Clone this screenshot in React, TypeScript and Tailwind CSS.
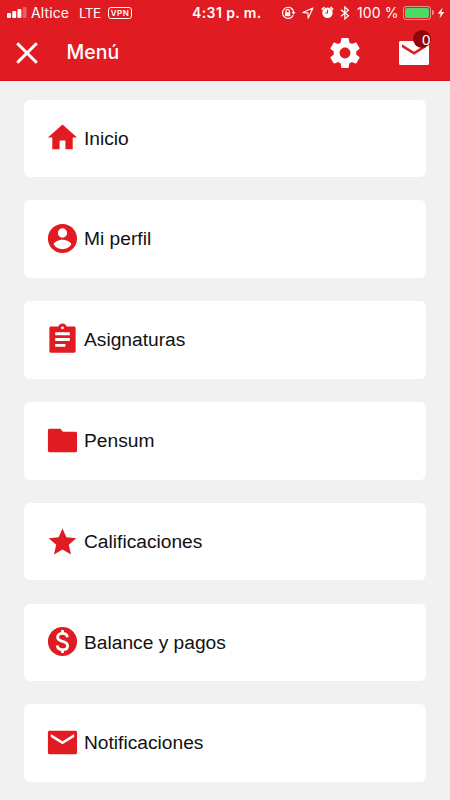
import type { ReactNode } from "react";

type MenuItem = {
  label: string;
  icon: ReactNode;
};

const mailPath =
  "M21 4H3c-.55 0-1 .45-1 1v14c0 .55.45 1 1 1h18c.55 0 1-.45 1-1V5c0-.55-.45-1-1-1zm-1 4.2l-8 5-8-5V6.1l8 5 8-5z";

const items: MenuItem[] = [
  { label: "Inicio", icon: <path d="M10 20v-6h4v6h5v-8h3L12 3 2 12h3v8z" /> },
  {
    label: "Mi perfil",
    icon: (
      <path d="M12 2C6.48 2 2 6.48 2 12s4.48 10 10 10 10-4.48 10-10S17.52 2 12 2zm0 3a3.2 3.2 0 1 1 0 6.4A3.2 3.2 0 0 1 12 5zm0 14.3c-2.5 0-4.71-1.28-6-3.22.03-1.99 4-3.18 6-3.18s5.97 1.19 6 3.18c-1.29 1.94-3.5 3.22-6 3.22z" />
    ),
  },
  {
    label: "Asignaturas",
    icon: (
      <path d="M20 3h-5.18C14.4 1.84 13.3 1 12 1s-2.4.84-2.82 2H4c-.55 0-1 .45-1 1v16c0 .55.45 1 1 1h16c.55 0 1-.45 1-1V4c0-.55-.45-1-1-1zm-8 0c.55 0 1 .45 1 1s-.45 1-1 1-1-.45-1-1 .45-1 1-1zm2 14H7v-2h7v2zm3-4H7v-2h10v2zm0-4H7V7h10v2z" />
    ),
  },
  {
    label: "Pensum",
    icon: (
      <path d="M10.3 4H3c-.55 0-1 .45-1 1v14c0 .55.45 1 1 1h18c.55 0 1-.45 1-1V7c0-.55-.45-1-1-1h-8.8l-1.4-1.7c-.1-.2-.3-.3-.5-.3z" />
    ),
  },
  {
    label: "Calificaciones",
    icon: <path d="M12 17.4l5.85 3.55-1.55-6.7 5.15-4.5-6.8-.6L12 3 9.35 9.15l-6.8.6 5.15 4.5-1.55 6.7z" />,
  },
  {
    label: "Balance y pagos",
    icon: (
      <>
        <circle cx="12" cy="12" r="10" />
        <path
          d="M15.4 9.1c-.2-1.7-1.5-2.7-3.4-2.7s-3.4 1-3.4 2.7c0 1.6 1.2 2.2 3.4 2.8 2.3.6 3.5 1.4 3.5 3.1 0 1.6-1.4 2.6-3.5 2.6s-3.5-1.1-3.6-2.9M12 4.1v2.4M12 17.5v2.4"
          fill="none"
          stroke="#fff"
          strokeWidth="1.9"
        />
      </>
    ),
  },
  { label: "Notificaciones", icon: <path d={mailPath} /> },
];

function StatusBar() {
  return (
    <div className="flex h-[25px] items-center whitespace-nowrap pl-[7px] text-[14px] leading-6 font-['Inter',sans-serif]">
      <svg width="20" height="11" viewBox="0 0 20 11" fill="currentColor">
        <rect x="0" y="6" width="4" height="5" rx="1" />
        <rect x="5.2" y="4" width="4" height="7" rx="1" />
        <rect x="10.4" y="2" width="4" height="9" rx="1" />
        <rect x="15.6" y="0" width="4" height="11" rx="1" opacity="0.3" />
      </svg>
      <span className="ml-1 w-[48px] text-[14px] tracking-[0.1px]">Altice</span>
      <span className="w-[29px] text-[13.5px] tracking-[-0.5px]">LTE</span>
      <span className="flex h-[12px] w-[24px] items-center justify-center rounded-[3px] border border-white text-[8px] leading-none font-semibold tracking-[0.4px]">
        VPN
      </span>
      <span className="ml-[60px] w-[89px] text-[14px] font-semibold tracking-[0.4px]">4:31 p. m.</span>
      <svg width="15" height="14" viewBox="0 0 15 14" fill="none" stroke="currentColor" strokeWidth="1.2">
        <path d="M11.8 3.7A5.6 5.6 0 1 0 12.2 9.3" />
        <path d="M10.5 2.2A5.6 5.6 0 0 1 12.5 6.5" />
        <path d="M10.6 6h4l-2 2.8z" fill="currentColor" stroke="none" />
        <path d="M5 6.3V5a1.7 1.7 0 0 1 3.4 0v1.3" />
        <path d="M4.1 6.2h5.2v4H4.1z" fill="currentColor" stroke="none" />
      </svg>
      <svg className="ml-[6px]" width="12" height="12" viewBox="0 0 12 12" fill="none" stroke="currentColor" strokeWidth="1.1" strokeLinejoin="round">
        <path d="M11 1 .8 5.5l5.2.6.1 5.2z" />
      </svg>
      <svg className="ml-[7px]" width="13" height="13" viewBox="0 0 13 13" fill="none" stroke="currentColor">
        <circle cx="6.5" cy="6.8" r="5.2" fill="currentColor" stroke="none" />
        <path d="M.8 3.6 3.5 1M12.2 3.6 9.5 1" strokeWidth="1.5" />
        <path d="M6.5 3.8v3.3H4.2" stroke="#e01b22" strokeWidth="1" />
      </svg>
      <svg className="ml-[6px]" width="10" height="14" viewBox="0 0 10 14" fill="none" stroke="currentColor" strokeWidth="1.2">
        <path d="m1 3.7 7.5 6L4.8 13V1l3.7 3.3-7.5 6" />
      </svg>
      <span className="ml-[7px] w-[46px] text-[14px] tracking-[0.1px]">100 %</span>
      <span className="flex h-[14px] w-[28px] rounded-[3px] border border-white/50 p-px">
        <span className="grow rounded-[2px] bg-[#4cd964]" />
      </span>
      <span className="ml-[1px] h-[5px] w-[2px] rounded-r-full bg-white/50" />
      <svg className="ml-[3px]" width="8" height="12" viewBox="0 0 8 12" fill="currentColor">
        <path d="M5.6.5.7 6.8h3L2.4 11.5l4.9-6.4H4.4z" />
      </svg>
    </div>
  );
}

function GearIcon() {
  return (
    <svg className="ml-auto size-[36px]" viewBox="0 0 24 24" fill="currentColor">
      <path d="M19.43 12.98c.04-.32.07-.64.07-.98s-.03-.66-.07-.98l2.11-1.65c.19-.15.24-.42.12-.64l-2-3.46c-.12-.22-.39-.3-.61-.22l-2.49 1c-.52-.4-1.08-.73-1.69-.98l-.38-2.65C14.46 2.18 14.25 2 14 2h-4c-.25 0-.46.18-.49.42l-.38 2.65c-.61.25-1.17.59-1.69.98l-2.49-1c-.23-.09-.49 0-.61.22l-2 3.46c-.13.22-.07.49.12.64l2.11 1.65c-.04.32-.07.65-.07.98s.03.66.07.98l-2.11 1.65c-.19.15-.24.42-.12.64l2 3.46c.12.22.39.3.61.22l2.49-1c.52.4 1.08.73 1.69.98l.38 2.65c.03.24.24.42.49.42h4c.25 0 .46-.18.49-.42l.38-2.65c.61-.25 1.17-.59 1.69-.98l2.49 1c.23.09.49 0 .61-.22l2-3.46c.12-.22.07-.49-.12-.64l-2.11-1.65zM12 15.6c-1.99 0-3.6-1.61-3.6-3.6s1.61-3.6 3.6-3.6 3.6 1.61 3.6 3.6-1.61 3.6-3.6 3.6z" />
    </svg>
  );
}

function Toolbar() {
  return (
    <div className="flex h-[55px] items-center">
      <svg className="ml-[16px]" width="22" height="22" viewBox="0 0 22 22" stroke="currentColor" strokeWidth="3">
        <path d="m1.2 1.2 19.6 19.6M20.8 1.2 1.2 20.8" />
      </svg>
      <h1 className="ml-[28.5px] pb-[1px] text-[19.5px] leading-6 font-medium font-['Inter',sans-serif]">Menú</h1>
      <GearIcon />
      <div className="relative ml-[33px] mr-[18px] size-[36px]">
        <svg className="size-[36px]" viewBox="0 0 24 24" fill="currentColor">
          <path d={mailPath} />
        </svg>
        <span className="absolute top-[-5px] left-[17px] size-[18px] rounded-full bg-[#8f0508]" />
        <span className="absolute top-[-4px] left-[26px] text-[15px] leading-[18px]">0</span>
      </div>
    </div>
  );
}

export default function App() {
  return (
    <div className="h-[800px] w-[450px] overflow-hidden bg-[#f1f1f1] font-['Liberation_Sans',Arial,sans-serif]">
      <header className="h-[81px] border-b border-[#d9131a] bg-[#e01b22] text-white">
        <StatusBar />
        <Toolbar />
      </header>
      <nav className="flex flex-col gap-[23.3px] px-6 pt-[18.7px]">
        {items.map(({ label, icon }) => (
          <a key={label} className="flex h-[77.5px] items-center rounded-[6px] bg-white pl-[21px]">
            <svg className="mb-[1px] size-[35px] text-[#e01b22]" viewBox="0 0 24 24" fill="currentColor">
              {icon}
            </svg>
            <span className="ml-[4px] pt-[1px] text-[19.2px] text-[#111]">{label}</span>
          </a>
        ))}
      </nav>
    </div>
  );
}
